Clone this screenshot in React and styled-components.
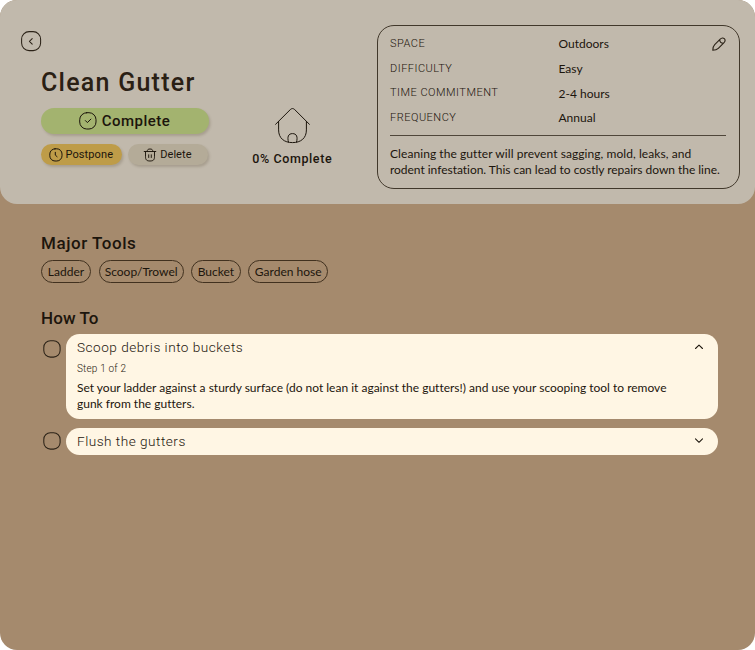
import React, { useState } from "react";
import styled, { createGlobalStyle } from "styled-components";

const ink = "#2b2217";
const heading = '"Roboto", "Liberation Sans", sans-serif';
const body = '"Lato", "Noto Sans", sans-serif';

const GlobalStyle = createGlobalStyle`
  *, *::before, *::after { box-sizing: border-box; }
  body { margin: 0; background: #fff; }
  button { font: inherit; color: inherit; background: none; border: 0; padding: 0; cursor: pointer; }
  h1, h2, h3, p, dl, dt, dd, ul { margin: 0; padding: 0; font-weight: inherit; }
  svg { display: block; flex: none; fill: none; stroke: currentColor; stroke-linecap: round; stroke-linejoin: round; }
`;

const Page = styled.div`
  width: 755px;
  height: 650px;
  border-radius: 17px;
  overflow: hidden;
  background: #a58a6d;
  color: #1c150c;
  font-family: ${body};
  font-size: 12px;
  font-variant-ligatures: none;
`;

const Header = styled.header`
  display: grid;
  grid-template-columns: 188px 168px 362.5px;
  height: 204px;
  padding-left: 21px;
  border-radius: 0 0 17px 17px;
  background: #c1b9ac;
`;

const TaskColumn = styled.div`
  padding-top: 31px;
`;

const BackButton = styled.button`
  display: block;
  color: ${ink};
`;

const TaskActions = styled.div`
  display: flex;
  flex-direction: column;
  margin-left: 20px;
`;

const Title = styled.h1`
  margin-top: 16px;
  height: 30px;
  font: 500 25px/30px ${heading};
  letter-spacing: 1.25px;
  white-space: nowrap;
  color: #2a2014;
`;

const ActionRow = styled.div`
  display: flex;
  gap: 6px;
  margin-top: 10px;
`;

const tones = {
  complete: "#a3b36f",
  postpone: "#be9c48",
  remove: "#b4ab98",
};

const ActionButton = styled.button`
  display: flex;
  align-items: center;
  justify-content: center;
  gap: ${(p) => (p.$large ? 4.5 : 3)}px;
  width: ${(p) => (p.$large ? 167.5 : 80.6)}px;
  height: ${(p) => (p.$large ? 26 : 21)}px;
  margin-top: ${(p) => (p.$large ? 10 : 0)}px;
  padding-right: ${(p) => (p.$large ? 0 : 1)}px;
  border-radius: 13px;
  background: ${(p) => tones[p.$tone]};
  box-shadow: 1.5px 2px 2.5px rgba(70, 55, 30, 0.2);
  font: ${(p) => (p.$large ? "500 15px" : "400 11px")}/1 ${heading};
  letter-spacing: ${(p) => (p.$large ? 0.5 : p.$tone === "postpone" ? 0.1 : 0.05)}px;
  white-space: nowrap;
  color: #1c150c;
`;

const Progress = styled.div`
  display: flex;
  flex-direction: column;
  align-items: center;
  padding: 107px 1.5px 0 0;
`;

const ProgressLabel = styled.p`
  margin-top: 7px;
  font: 500 12.5px/16px ${heading};
  letter-spacing: 0.6px;
  color: #1c150c;
`;

const InfoPanel = styled.section`
  margin-top: 25px;
  height: 164px;
  padding: 5.7px 13px 0 12px;
  border: 1px solid #41382b;
  border-radius: 17px;
`;

const Facts = styled.dl`
  height: 104.3px;
  border-bottom: 1px solid #4f463a;
`;

const Fact = styled.div`
  display: grid;
  grid-template-columns: 168.5px 1fr auto;
  align-items: center;
  height: 24.7px;
`;

const FactName = styled.dt`
  font: 300 11px/22px ${heading};
  letter-spacing: 0.5px;
  color: #1c150c;
`;

const FactValue = styled.dd`
  padding-top: 0.5px;
  line-height: 22px;
`;

const EditButton = styled.button`
  color: ${ink};
`;

const Description = styled.p`
  margin-top: 10px;
`;

const DescriptionLine = styled.span`
  display: block;
  line-height: 16px;
  letter-spacing: ${(p) => p.$tracking}px;
  white-space: nowrap;
`;

const Main = styled.main`
  padding: 29px 37.5px 0 41px;
`;

const SectionTitle = styled.h2`
  height: 20px;
  font: 500 17px/20px ${heading};
  letter-spacing: ${(p) => p.$tracking}px;
`;

const ToolList = styled.ul`
  display: flex;
  gap: 7.5px;
  margin: 7px 0 25px;
  list-style: none;
`;

const Tool = styled.li`
  display: flex;
  align-items: center;
  justify-content: center;
  width: ${(p) => p.$width}px;
  height: 22.5px;
  padding-top: 1px;
  border: 1px solid #41311f;
  border-radius: 11.5px;
  line-height: 20px;
  white-space: nowrap;
`;

const Steps = styled.div`
  display: flex;
  flex-direction: column;
  gap: 8.3px;
  margin-top: 6.2px;
`;

const StepRow = styled.div`
  display: flex;
  align-items: flex-start;
  gap: 5.2px;
  padding-left: 2px;
`;

const CheckButton = styled.button`
  margin-top: ${(p) => (p.$open ? 6 : 4.7)}px;
  color: ${ink};
`;

const StepCard = styled.article`
  flex: 1;
  height: ${(p) => (p.$open ? 85.6 : 27.4)}px;
  padding: 0 11.5px 0 10.8px;
  border-radius: 13.5px;
  background: #fff6e4;
`;

const StepHead = styled.button`
  display: flex;
  align-items: center;
  justify-content: space-between;
  width: 100%;
  height: 27px;
  color: #1c150c;
`;

const StepTitle = styled.h3`
  font: 300 13.6px/20px ${heading};
  letter-spacing: 0.5px;
`;

const StepCount = styled.p`
  padding-top: 1px;
  font: 300 10px/14px ${heading};
  letter-spacing: 0.18px;
  color: #1c150c;
`;

const StepText = styled.p`
  width: 610px;
  margin-top: 4px;
  line-height: 16px;
`;

const BackIcon = () => (
  <svg width="21" height="21" viewBox="0 0 21 21" strokeWidth="1.05">
    <rect x=".6" y=".6" width="19" height="19" rx="7.5" />
    <path d="M11.2 7.6 8.4 10.3l2.8 2.8" />
  </svg>
);

const CheckIcon = () => (
  <svg width="18" height="18" viewBox="0 0 18 18" strokeWidth="1">
    <rect x=".7" y=".7" width="16.3" height="16.3" rx="7" />
    <path d="m6.4 8.6 2 2 3.5-3.5" />
  </svg>
);

const ClockIcon = () => (
  <svg width="14" height="14" viewBox="0 0 14 14" strokeWidth="1">
    <rect x=".8" y=".8" width="12.2" height="12.2" rx="5.2" />
    <path d="M6.3 4.3v2.8l1.8 1.6" />
  </svg>
);

const TrashIcon = () => (
  <svg width="14" height="14" viewBox="0 0 14 14" strokeWidth=".95">
    <path d="M1.2 3.5h11.6M2.5 3.6v5.2c0 2.8 1 4.2 4.5 4.2s4.5-1.4 4.5-4.2V3.6M4.2 3.4C4.2 1.7 5 1 7 1s2.8.7 2.8 2.4M5.7 6.8v2.7M8.3 6.8v2.7" />
  </svg>
);

const HouseIcon = () => (
  <svg width="37" height="37" viewBox="0 0 37 37" strokeWidth="1">
    <path d="M1.6 17.3 16.3 2.6c1.5-1.4 2.9-1.4 4.4 0l14.7 14.7M4.6 14.4v8.5c0 8.3 5.5 12.7 13.9 12.7s13.9-4.4 13.9-12.7v-8.5M14.5 35.1c-1.5-5.2-.2-8.5 4-8.5s5.5 3.3 4 8.5" />
  </svg>
);

const PencilIcon = () => (
  <svg width="14" height="14" viewBox="0 0 14 14" strokeWidth="1.1">
    <path d="M.8 13.2c0-2.2.4-4 1.9-5.5l5.5-5.5c1.5-1.5 3-1.6 4.1-.5s1 2.6-.5 4.1l-5.5 5.5C4.8 12.8 3 13.2.8 13.2ZM7.7 2.7c.1 2 1.6 3.5 3.6 3.6" />
  </svg>
);

const BoxIcon = () => (
  <svg width="18" height="18" viewBox="0 0 18 18" strokeWidth="1.05">
    <rect x=".8" y=".8" width="16.3" height="16.3" rx="6.6" />
  </svg>
);

const ChevronIcon = ({ open }) => (
  <svg width="14" height="14" viewBox="0 0 14 14" strokeWidth="1.05">
    <path d={open ? "m3.5 8.5 3.5-3.4 3.5 3.4" : "m3.5 4.9 3.5 3.4 3.5-3.4"} />
  </svg>
);

const facts = [
  ["SPACE", "Outdoors"],
  ["DIFFICULTY", "Easy"],
  ["TIME COMMITMENT", "2-4 hours"],
  ["FREQUENCY", "Annual"],
];

const tools = [
  { name: "Ladder", width: 50 },
  { name: "Scoop/Trowel", width: 85.3 },
  { name: "Bucket", width: 49.3 },
  { name: "Garden hose", width: 80.2 },
];

const steps = [
  {
    title: "Scoop debris into buckets",
    text: "Set your ladder against a sturdy surface (do not lean it against the gutters!) and use your scooping tool to remove gunk from the gutters.",
  },
  { title: "Flush the gutters", text: "" },
];

export default function App() {
  const [openStep, setOpenStep] = useState(0);
  return (
    <Page>
      <GlobalStyle />
      <Header>
        <TaskColumn>
          <BackButton aria-label="Back"><BackIcon /></BackButton>
          <TaskActions>
            <Title>Clean Gutter</Title>
            <ActionButton $large $tone="complete"><CheckIcon />Complete</ActionButton>
            <ActionRow>
              <ActionButton $tone="postpone"><ClockIcon />Postpone</ActionButton>
              <ActionButton $tone="remove"><TrashIcon />Delete</ActionButton>
            </ActionRow>
          </TaskActions>
        </TaskColumn>
        <Progress>
          <HouseIcon />
          <ProgressLabel>0% Complete</ProgressLabel>
        </Progress>
        <InfoPanel>
          <Facts>
            {facts.map(([name, value], i) => (
              <Fact key={name}>
                <FactName>{name}</FactName>
                <FactValue>{value}</FactValue>
                {i === 0 && <EditButton aria-label="Edit"><PencilIcon /></EditButton>}
              </Fact>
            ))}
          </Facts>
          <Description>
            <DescriptionLine $tracking={0.07}>
              Cleaning the gutter will prevent sagging, mold, leaks, and
            </DescriptionLine>
            <DescriptionLine $tracking={-0.03}>
              rodent infestation. This can lead to costly repairs down the line.
            </DescriptionLine>
          </Description>
        </InfoPanel>
      </Header>
      <Main>
        <SectionTitle $tracking={0.55}>Major Tools</SectionTitle>
        <ToolList>
          {tools.map((t) => <Tool key={t.name} $width={t.width}>{t.name}</Tool>)}
        </ToolList>
        <SectionTitle $tracking={0.1}>How To</SectionTitle>
        <Steps>
          {steps.map((s, i) => (
            <StepRow key={s.title}>
              <CheckButton $open={openStep === i} aria-label="Mark step done"><BoxIcon /></CheckButton>
              <StepCard $open={openStep === i}>
                <StepHead onClick={() => setOpenStep(i)}>
                  <StepTitle>{s.title}</StepTitle>
                  <ChevronIcon open={openStep === i} />
                </StepHead>
                {openStep === i && (
                  <>
                    <StepCount>Step {i + 1} of {steps.length}</StepCount>
                    <StepText>{s.text}</StepText>
                  </>
                )}
              </StepCard>
            </StepRow>
          ))}
        </Steps>
      </Main>
    </Page>
  );
}
